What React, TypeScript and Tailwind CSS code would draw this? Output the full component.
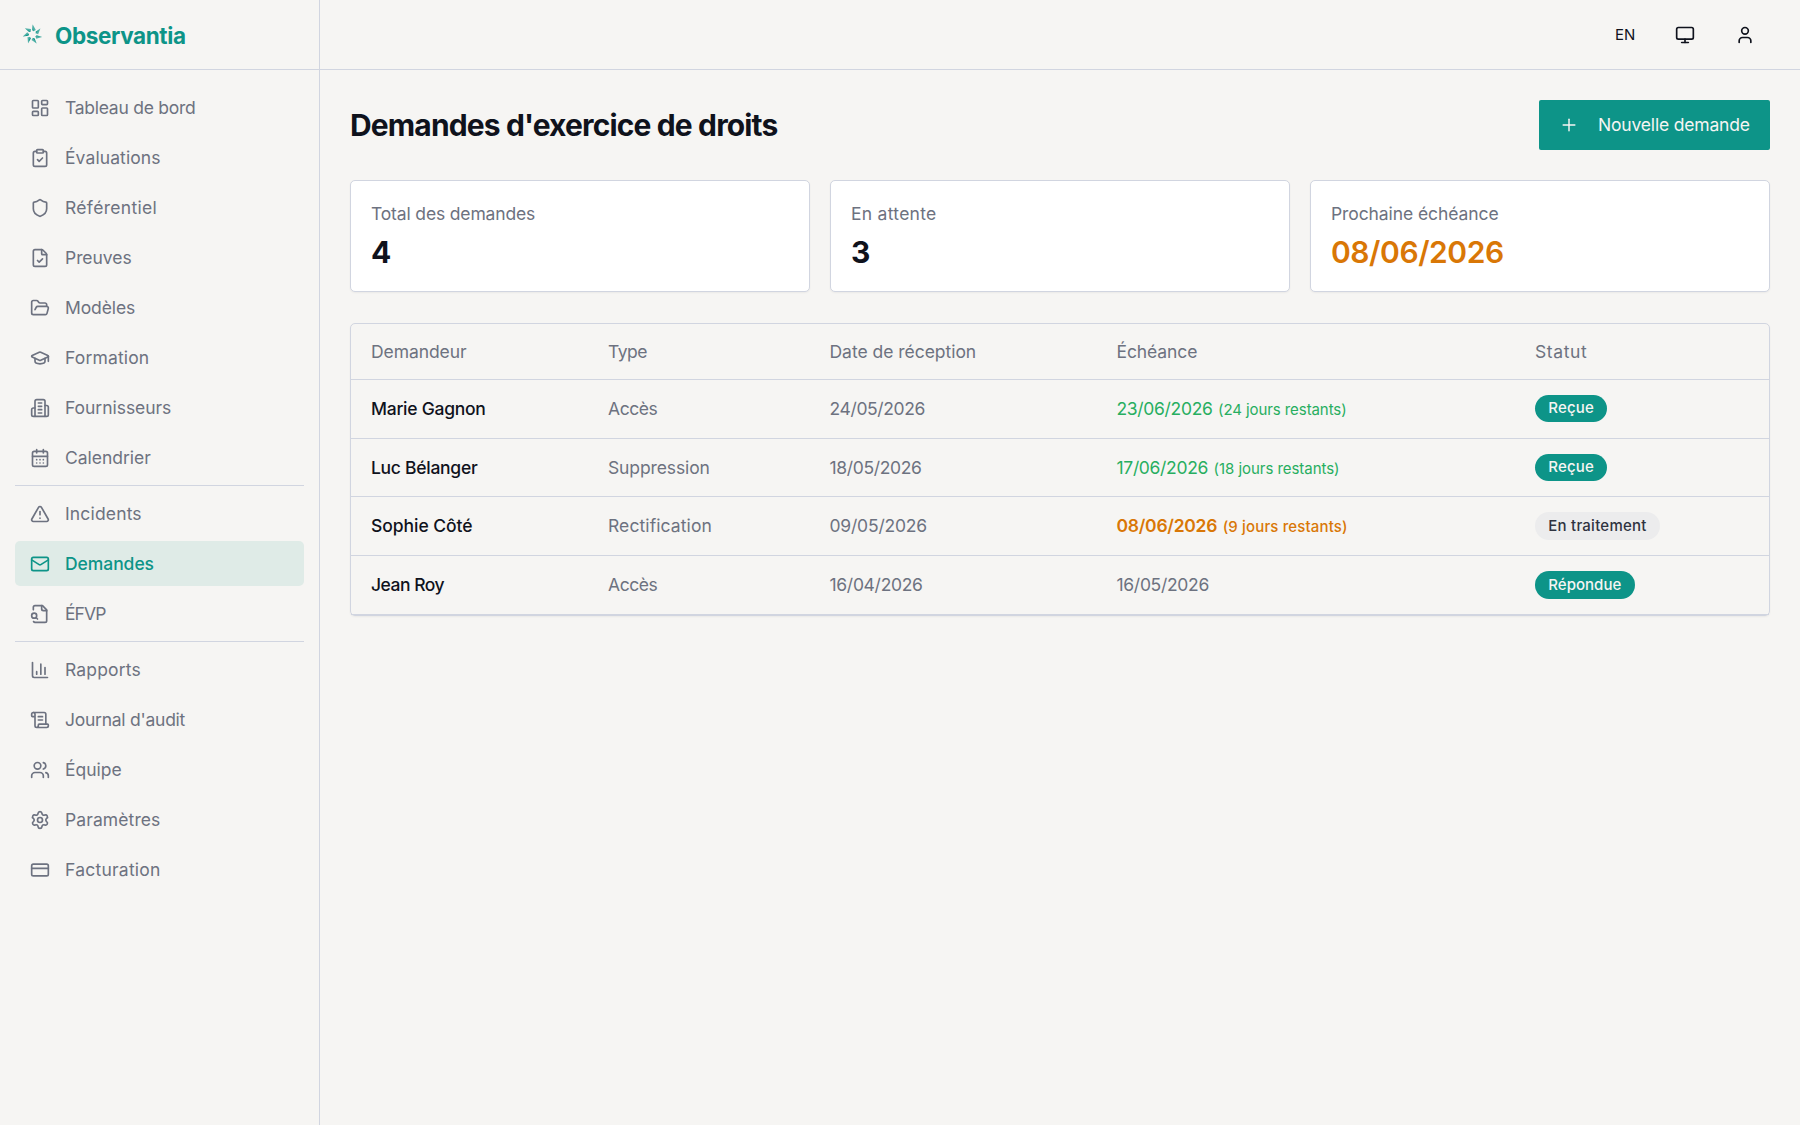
import React from "react";
import {
	CalendarDays,
	ClipboardCheck,
	CreditCard,
	FileCheck,
	FolderOpen,
	GraduationCap,
	LayoutDashboard,
	Mail,
	Monitor,
	Plus,
	ScrollText,
	Settings,
	Shield,
	TriangleAlert,
	User,
	Users,
} from "lucide-react";

type IconProps = { className?: string; strokeWidth?: number };

const svgProps = {
	viewBox: "0 0 24 24",
	fill: "none",
	stroke: "currentColor",
	strokeLinecap: "round" as const,
	strokeLinejoin: "round" as const,
};

const BuildingIcon = ({ className, strokeWidth = 2 }: IconProps) => (
	<svg {...svgProps} strokeWidth={strokeWidth} className={className}>
		<path d="M6 22V4a2 2 0 0 1 2-2h8a2 2 0 0 1 2 2v18Z" />
		<path d="M6 12H4a2 2 0 0 0-2 2v6a2 2 0 0 0 2 2h2" />
		<path d="M18 9h2a2 2 0 0 1 2 2v9a2 2 0 0 1-2 2h-2" />
		<path d="M10 6h4M10 10h4M10 14h4M10 18h4" />
	</svg>
);

const FileSearchIcon = ({ className, strokeWidth = 2 }: IconProps) => (
	<svg {...svgProps} strokeWidth={strokeWidth} className={className}>
		<path d="M14 2v4a2 2 0 0 0 2 2h4" />
		<path d="M4.268 21a2 2 0 0 0 1.727 1H18a2 2 0 0 0 2-2V7l-5-5H6a2 2 0 0 0-2 2v3" />
		<path d="m9 18-1.5-1.5" />
		<circle cx="5" cy="14" r="3" />
	</svg>
);

const ChartIcon = ({ className, strokeWidth = 2 }: IconProps) => (
	<svg {...svgProps} strokeWidth={strokeWidth} className={className}>
		<path d="M3 3v16a2 2 0 0 0 2 2h16" />
		<path d="M18 17V9M13 17V5M8 17v-3" />
	</svg>
);

const blades = [0, 1, 2, 3, 4, 5, 6];

const Logo = () => (
	<svg viewBox="-12.5 -12.5 25 25" className="size-[25px] shrink-0">
		{blades.map((i) => (
			<g key={i} transform={`rotate(${(i * 360) / 7})`}>
				<path d="M0.2 -9.9L3.3 -4.6L1.1 -3.2Z" fill="#0d9488" fillOpacity="0.7" />
				<path d="M0.2 -9.9L1.4 -3.2L-0.3 -4.2Z" fill="#0d9488" />
			</g>
		))}
	</svg>
);

const navGroups = [
	[
		{ label: "Tableau de bord", icon: LayoutDashboard, track: "tracking-[-0.26px]" },
		{ label: "Évaluations", icon: ClipboardCheck, track: "tracking-[0.1px]" },
		{ label: "Référentiel", icon: Shield, track: "tracking-[0.32px]" },
		{ label: "Preuves", icon: FileCheck, track: "tracking-[-0.05px]" },
		{ label: "Modèles", icon: FolderOpen, track: "tracking-[-0.1px]" },
		{ label: "Formation", icon: GraduationCap, track: "tracking-[0.15px]" },
		{ label: "Fournisseurs", icon: BuildingIcon, track: "tracking-[-0.04px]" },
		{ label: "Calendrier", icon: CalendarDays, track: "tracking-[-0.03px]" },
	],
	[
		{ label: "Incidents", icon: TriangleAlert, track: "tracking-[0.16px]" },
		{ label: "Demandes", icon: Mail, track: "tracking-[-0.06px]", active: true },
		{ label: "ÉFVP", icon: FileSearchIcon, track: "tracking-[-0.9px]" },
	],
	[
		{ label: "Rapports", icon: ChartIcon, track: "tracking-[0.16px]" },
		{ label: "Journal d'audit", icon: ScrollText, track: "tracking-[-0.25px]" },
		{ label: "Équipe", icon: Users, track: "tracking-normal" },
		{ label: "Paramètres", icon: Settings, track: "tracking-[0.1px]" },
		{ label: "Facturation", icon: CreditCard, track: "tracking-[0.24px]" },
	],
];

const stats = [
	{ label: "Total des demandes", track: "tracking-[-0.15px]", value: "4", style: "font-bold" },
	{ label: "En attente", track: "tracking-[0.28px]", value: "3", style: "font-bold" },
	{
		label: "Prochaine échéance",
		track: "tracking-[-0.09px]",
		value: "08/06/2026",
		style: "font-semibold text-[#d97706] tracking-[-0.44px]",
	},
];

const headers = [
	{ label: "Demandeur", track: "tracking-[-0.07px]" },
	{ label: "Type", track: "tracking-[-0.5px]" },
	{ label: "Date de réception", track: "tracking-[-0.03px]" },
	{ label: "Échéance", track: "tracking-[-0.1px]" },
	{ label: "Statut", track: "tracking-[0.61px]" },
];

const requests = [
	{
		name: "Marie Gagnon",
		nameTrack: "tracking-[-0.26px]",
		type: "Accès",
		typeTrack: "tracking-[-0.44px]",
		received: "24/05/2026",
		receivedTrack: "tracking-[-0.37px]",
		due: "23/06/2026",
		dueStyle: "text-[#27ae60] tracking-[-0.32px]",
		left: "(24 jours restants)",
		leftTrack: "tracking-[-0.08px]",
		status: "Reçue",
		statusStyle: "bg-[#0d9488] text-[#f6f5f3] tracking-[0.2px]",
	},
	{
		name: "Luc Bélanger",
		nameTrack: "tracking-[-0.28px]",
		type: "Suppression",
		typeTrack: "tracking-[-0.12px]",
		received: "18/05/2026",
		receivedTrack: "tracking-[-0.35px]",
		due: "17/06/2026",
		dueStyle: "text-[#27ae60] tracking-[-0.32px]",
		left: "(18 jours restants)",
		leftTrack: "tracking-[-0.05px]",
		status: "Reçue",
		statusStyle: "bg-[#0d9488] text-[#f6f5f3] tracking-[0.2px]",
	},
	{
		name: "Sophie Côté",
		nameTrack: "tracking-[-0.05px]",
		type: "Rectification",
		typeTrack: "tracking-[0.1px]",
		received: "09/05/2026",
		receivedTrack: "tracking-[-0.2px]",
		due: "08/06/2026",
		dueStyle: "font-semibold text-[#d97706] tracking-[-0.26px]",
		left: "(9 jours restants)",
		leftTrack: "font-medium tracking-[0.14px]",
		status: "En traitement",
		statusStyle: "bg-[#ececed] text-[#2f3340] tracking-[0.24px]",
	},
	{
		name: "Jean Roy",
		nameTrack: "tracking-[-0.5px]",
		type: "Accès",
		typeTrack: "tracking-[-0.44px]",
		received: "16/04/2026",
		receivedTrack: "tracking-[-0.3px]",
		due: "16/05/2026",
		dueStyle: "text-[#6d7280] tracking-[-0.3px]",
		left: "",
		leftTrack: "",
		status: "Répondue",
		statusStyle: "bg-[#0d9488] text-[#f6f5f3] tracking-[0.03px]",
	},
];

const columns = "grid grid-cols-[237px_221.5px_287px_418.5px_1fr] items-center px-5";

const Sidebar = () => (
	<aside className="flex w-80 shrink-0 flex-col border-r border-[#d1d5e0]">
		<div className="flex h-[70px] items-center gap-[10px] border-b border-[#d1d5e0] px-5">
			<Logo />
			<span className="pt-[2px] text-[22.5px] font-bold tracking-[-0.38px] text-[#0d9488]">
				Observantia
			</span>
		</div>
		<nav className="flex flex-col px-[15px] pt-[15.25px]">
			{navGroups.map((group, i) => (
				<div
					key={i}
					className={`flex flex-col gap-[5px] ${i > 0 ? "mt-[5px] border-t border-[#d1d5e0] pt-[5px]" : ""}`}
				>
					{group.map(({ label, icon: Icon, track, active }: any) => (
						<a
							key={label}
							className={`flex h-[45px] items-center gap-[15px] rounded-[5px] px-[15px] text-[17.5px] ${track} ${
								active ? "bg-[#dfebe7] font-medium text-[#0d9488]" : "text-[#6d7280]"
							}`}
						>
							<Icon className="size-5 shrink-0" strokeWidth={2} />
							{label}
						</a>
					))}
				</div>
			))}
		</nav>
	</aside>
);

export default function App() {
	return (
		<div className="flex h-screen overflow-hidden bg-[#f6f5f3] font-['Inter',sans-serif] text-[#0f121c]">
			<Sidebar />
			<div className="flex flex-1 flex-col">
				<header className="flex h-[70px] items-center justify-end gap-10 border-b border-[#d1d5e0] pr-[45px]">
					<span className="pt-px text-[15px] tracking-[-0.2px]">EN</span>
					<Monitor className="size-5" strokeWidth={2} />
					<User className="size-5" strokeWidth={2} />
				</header>
				<main className="flex flex-col gap-[30px] p-[30px]">
					<div className="flex h-[50px] items-center justify-between">
						<h1 className="text-[30px] leading-[40px] font-bold tracking-[-0.86px]">
							Demandes d'exercice de droits
						</h1>
						<button className="flex h-[50px] w-[231px] items-center gap-[19px] rounded-[2px] bg-[#0d9488] pl-5 text-[17.5px] tracking-[-0.18px] whitespace-nowrap text-[#f6f5f3]">
							<Plus className="size-5 shrink-0" strokeWidth={1.75} />
							Nouvelle demande
						</button>
					</div>
					<div className="grid h-[112.5px] grid-cols-3 items-start gap-5">
						{stats.map((s) => (
							<div
								key={s.label}
								className="h-[112px] rounded-[5px] border border-[#d1d5e0] bg-white px-5 pt-5 shadow-xs"
							>
								<p className={`text-[17.5px] leading-[25px] text-[#6d7280] ${s.track}`}>
									{s.label}
								</p>
								<p className={`mt-[6px] text-[30px] leading-[40px] ${s.style}`}>{s.value}</p>
							</div>
						))}
					</div>
					<div className="rounded-[5px] border border-[#d1d5e0] text-[17.5px] text-[#6d7280] shadow-xs">
						<div className={`${columns} h-[56.25px] border-b border-[#d1d5e0]`}>
							{headers.map((h) => (
								<span key={h.label} className={`pt-px ${h.track}`}>
									{h.label}
								</span>
							))}
						</div>
						{requests.map((r) => (
							<div key={r.name} className={`${columns} h-[58.75px] border-b border-[#d1d5e0]`}>
								<span className={`pt-[0.5px] font-[450] text-[#0f121c] ${r.nameTrack}`}>
									{r.name}
								</span>
								<span className={`pt-[0.5px] ${r.typeTrack}`}>{r.type}</span>
								<span className={`pt-[0.5px] ${r.receivedTrack}`}>{r.received}</span>
								<span className={`pt-[0.5px] ${r.dueStyle}`}>
									{r.due}
									{r.left && (
										<span className={`ml-[5.5px] text-[15px] ${r.leftTrack}`}>{r.left}</span>
									)}
								</span>
								<span className="flex">
									<span
										className={`inline-flex h-[27.5px] items-center rounded-full px-[13.25px] text-[15px] font-medium ${r.statusStyle}`}
									>
										{r.status}
									</span>
								</span>
							</div>
						))}
					</div>
				</main>
			</div>
		</div>
	);
}
